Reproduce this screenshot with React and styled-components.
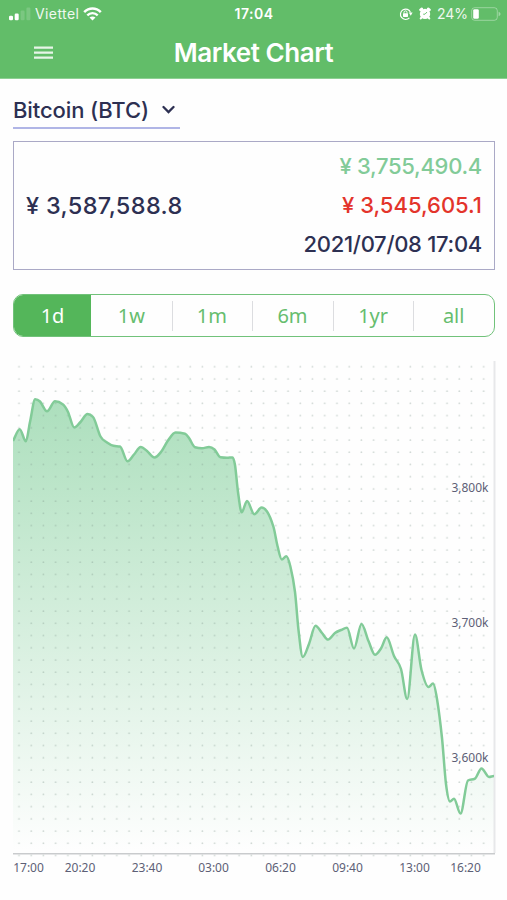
import React, { useState } from "react";
import styled, { createGlobalStyle } from "styled-components";

const RANGES = ["1d", "1w", "1m", "6m", "1yr", "all"];

const TIMES = [
  { label: "17:00", x: 15.5 },
  { label: "20:20", x: 67 },
  { label: "23:40", x: 134 },
  { label: "03:00", x: 200.5 },
  { label: "06:20", x: 267.5 },
  { label: "09:40", x: 334.5 },
  { label: "13:00", x: 401.5 },
  { label: "16:20", x: 452.5 },
];

const PRICES = [
  { label: "3,800k", y: 132 },
  { label: "3,700k", y: 267 },
  { label: "3,600k", y: 402 },
];

// price line, in chart pixels
const POINTS = [
  [0, 81], [6.7, 69.2], [12.9, 81.3], [17, 62], [22.2, 39.2], [27, 41.5],
  [34, 51.3], [42, 41.3], [50, 44.5], [55, 52], [61.2, 67.5], [67.5, 62],
  [74.5, 54], [80, 57], [87.5, 76.5], [94, 82.5], [100.5, 85.8], [107, 86.5],
  [114.5, 101.3], [121, 94.5], [127.7, 86.9], [134, 91], [141.5, 97.5],
  [148, 92], [155, 80.5], [162.5, 72.5], [172, 73.8], [176, 78], [182, 87.2],
  [189, 88.3], [196, 86.9], [201.5, 89.5], [207.5, 97.3], [214, 97.8],
  [219.5, 97.4], [222, 105], [225, 132], [228.7, 152.3], [234, 141],
  [241.3, 154.2], [248.5, 147.6], [254, 151.5], [260.5, 167], [264.5, 186],
  [268.8, 199.4], [273.3, 196.3], [277.5, 207], [282, 232], [285.5, 270],
  [289.8, 297], [296, 284], [302.5, 265.8], [309, 273], [315, 279.6],
  [322, 273], [328, 270], [334, 267.8], [341, 288.5], [348.5, 264],
  [355.5, 281], [362, 294.8], [368, 288.5], [373.7, 277.3], [381, 296],
  [388, 309], [394.2, 339], [402, 274.5], [408.5, 310], [415.5, 327],
  [420, 323.6], [424, 339], [429, 378], [433, 424], [437, 441.5],
  [441, 438.7], [447.5, 453.6], [455, 420.5], [462, 418.6], [468.5, 408.4],
  [476, 417], [481, 416],
];

const smoothPath = (pts) => {
  const slope = (a, b) => (b[1] - a[1]) / (b[0] - a[0]);
  const tangents = pts.map((p, i) => {
    if (i === 0) return slope(p, pts[1]);
    if (i === pts.length - 1) return 0;
    const before = slope(pts[i - 1], p);
    const after = slope(p, pts[i + 1]);
    if (before * after <= 0) return 0;
    const across = Math.abs(slope(pts[i - 1], pts[i + 1]));
    return (
      Math.sign(before) *
      Math.min(2 * Math.abs(before), 2 * Math.abs(after), across)
    );
  });
  return pts.slice(1).reduce((d, p, i) => {
    const prev = pts[i];
    const dx = (p[0] - prev[0]) / 3;
    const c1 = `${prev[0] + dx},${prev[1] + tangents[i] * dx}`;
    const c2 = `${p[0] - dx},${p[1] - tangents[i + 1] * dx}`;
    return `${d} C${c1} ${c2} ${p[0]},${p[1]}`;
  }, `M${pts[0][0]},${pts[0][1]}`);
};

const SignalIcon = () => (
  <svg width="22" height="14" viewBox="0 0 22 14" fill="#fff">
    <rect x="0" y="8.7" width="4" height="4.5" rx="1.2" />
    <rect x="5.7" y="6.5" width="4" height="6.7" rx="1.2" />
    <rect x="11.6" y="3.5" width="4" height="9.7" rx="1.2" opacity="0.16" />
    <rect x="17.4" y="0.5" width="4" height="12.7" rx="1.2" opacity="0.16" />
  </svg>
);

const WifiIcon = () => (
  <svg width="19" height="14" viewBox="0 0 19 14" fill="none" stroke="#fff">
    <path d="M1.2 5.1C6 0.2 13 0.2 17.8 5.1" strokeWidth="2.5" />
    <path d="M4.3 8.4C7.2 5.4 11.8 5.4 14.7 8.4" strokeWidth="2.3" />
    <path d="M9.5 13.5L6.5 10.6C8.2 9 10.8 9 12.5 10.6Z" fill="#fff" stroke="none" />
  </svg>
);

const RotationLockIcon = () => (
  <svg width="14" height="14" viewBox="0 0 14 14" fill="none" stroke="#fff">
    <path d="M10.4 10.9A5.2 5.2 0 1 1 11.5 5.4" strokeWidth="1.2" />
    <path d="M9.8 5.6h3.8l-1.8 3.2z" fill="#fff" stroke="none" />
    <rect x="4" y="6.3" width="5" height="3.6" rx="0.6" fill="#fff" stroke="none" />
    <path d="M5 6.6V5.4a1.5 1.5 0 0 1 3 0v1.2" />
  </svg>
);

const AlarmIcon = () => (
  <svg width="12" height="13" viewBox="0 0 12 13" fill="none" stroke="#fff">
    <circle cx="6" cy="6.9" r="5.2" fill="#fff" stroke="none" />
    <path d="M1.6 2.8L2.8 2M10.4 2.8L9.2 2" strokeWidth="2.8" strokeLinecap="round" />
    <path d="M2.3 10.8L1.8 11.4M9.7 10.8L10.2 11.4" strokeWidth="2.2" strokeLinecap="round" />
    <path d="M8 5L6 7.2H4.2" stroke="#62bd69" strokeWidth="0.9" />
  </svg>
);

const BatteryIcon = () => (
  <svg width="30" height="14" viewBox="0 0 30 14" fill="none">
    <rect x="0.7" y="0.7" width="25.6" height="12.6" rx="3" stroke="#fff" strokeOpacity="0.36" />
    <rect x="2.2" y="2.2" width="5.6" height="9.6" rx="1.4" fill="#fff" />
    <path d="M27.6 4.8v4.4c1.3-.5 1.9-1.3 1.9-2.2s-.6-1.7-1.9-2.2z" fill="#fff" opacity="0.4" />
  </svg>
);

const Chart = () => {
  const line = smoothPath(POINTS);
  return (
    <svg width="494" height="530" viewBox="0 0 494 530">
      <defs>
        <linearGradient id="area" x1="0" y1="39" x2="0" y2="490" gradientUnits="userSpaceOnUse">
          <stop offset="0" stopColor="#82cf9b" stopOpacity="0.66" />
          <stop offset="1" stopColor="#82cf9b" stopOpacity="0" />
        </linearGradient>
        <pattern id="dots" width="12.23" height="12.22" patternUnits="userSpaceOnUse">
          <circle cx="6" cy="6.7" r="0.9" fill="#7b9488" fillOpacity="0.36" />
        </pattern>
      </defs>
      <path d={`${line} V493 H0 Z`} fill="url(#area)" />
      <rect width="477" height="500" fill="url(#dots)" />
      <path d="M481.5 1V493" stroke="#e7e8ea" strokeWidth="2" />
      <path d="M0 493.8H482" stroke="#c9cbcd" strokeWidth="1.4" />
      <path d={line} fill="none" stroke="#82cb98" strokeWidth="2.5" strokeLinejoin="round" />
      {PRICES.map((p) => (
        <AxisLabel key={p.label} x="475.5" y={p.y} textAnchor="end">
          {p.label}
        </AxisLabel>
      ))}
      {TIMES.map((t) => (
        <AxisLabel key={t.label} x={t.x} y="512.4" textAnchor="middle">
          {t.label}
        </AxisLabel>
      ))}
    </svg>
  );
};

const App = () => {
  const [range, setRange] = useState("1d");
  return (
    <Screen>
      <GlobalStyle />
      <Header>
        <StatusBar>
          <StatusSide>
            <SignalIcon />
            <Carrier>Viettel</Carrier>
            <WifiIcon />
          </StatusSide>
          <Clock>17:04</Clock>
          <StatusSide $right>
            <RotationLockIcon />
            <AlarmIcon />
            <Percent>24%</Percent>
            <BatteryIcon />
          </StatusSide>
        </StatusBar>
        <NavBar>
          <MenuButton aria-label="Menu">
            <svg width="19" height="14" viewBox="0 0 19 14" stroke="#fff" strokeWidth="2.2">
              <path d="M0 1.7H19M0 6.7H19M0 11.7H19" />
            </svg>
          </MenuButton>
          <Title>Market Chart</Title>
        </NavBar>
      </Header>
      <Content>
        <CoinSelect>
          <span>Bitcoin (BTC)</span>
          <svg width="13" height="9" viewBox="0 0 13 9" fill="none" stroke="#2d3052" strokeWidth="2.3">
            <path d="M1.5 2L6.5 7L11.5 2" strokeLinecap="round" />
          </svg>
        </CoinSelect>
        <PriceBox>
          <CurrentPrice>¥ 3,587,588.8</CurrentPrice>
          <Quotes>
            <Quote $color="#82cb98" $spacing="-0.3px">¥ 3,755,490.4</Quote>
            <Quote $color="#e3342b">¥ 3,545,605.1</Quote>
            <Quote $color="#2d3052" $spacing="-0.3px">2021/07/08 17:04</Quote>
          </Quotes>
        </PriceBox>
        <Tabs>
          {RANGES.map((r) => (
            <Tab key={r} $active={r === range} onClick={() => setRange(r)}>
              {r}
            </Tab>
          ))}
        </Tabs>
        <Chart />
      </Content>
    </Screen>
  );
};

const GlobalStyle = createGlobalStyle`
  * {
    box-sizing: border-box;
  }
  body {
    margin: 0;
    background: #fefefe;
    font-family: Inter, "Liberation Sans", sans-serif;
  }
  svg {
    display: block;
    flex-shrink: 0;
  }
`;

const Screen = styled.div`
  width: 507px;
  height: 900px;
  overflow: hidden;
  background: #fefefe;
`;

const Header = styled.header`
  height: 79px;
  background: #62bd69;
  border-bottom: 1px solid #8dd093;
  color: #fff;
`;

const StatusBar = styled.div`
  display: grid;
  grid-template-columns: 1fr auto 1fr;
  align-items: center;
  height: 27px;
  padding: 0 8px 0 9px;
`;

const StatusSide = styled.div`
  display: flex;
  align-items: center;
  gap: ${(props) => (props.$right ? "6px" : "4px")};
  justify-content: ${(props) => (props.$right ? "flex-end" : "flex-start")};
  margin-right: ${(props) => (props.$right ? "-2px" : "0")};
`;

const Carrier = styled.span`
  font-size: 14px;
  letter-spacing: 0.4px;
  opacity: 0.9;
`;

const Percent = styled.span`
  font-size: 14px;
  margin-right: -3px;
  opacity: 0.9;
`;

const Clock = styled.span`
  font-size: 14px;
  font-weight: 600;
  letter-spacing: 0.5px;
`;

const NavBar = styled.div`
  display: grid;
  grid-template-columns: 1fr auto 1fr;
  align-items: center;
  height: 51px;
`;

const MenuButton = styled.button`
  justify-self: start;
  margin-left: 34px;
  padding: 0;
  border: none;
  background: none;
  opacity: 0.85;
  cursor: pointer;
`;

const Title = styled.h1`
  margin: 0;
  font-size: 26px;
  font-weight: 600;
  letter-spacing: -0.45px;
`;

const Content = styled.main`
  padding: 16px 0 0 13px;
`;

const CoinSelect = styled.div`
  display: flex;
  align-items: center;
  justify-content: space-between;
  width: 167px;
  height: 34px;
  padding: 0 5px 3px 0;
  border-bottom: 2px solid #b0b5e6;
  color: #2d3052;
  font-size: 22px;
  font-weight: 550;
  letter-spacing: -0.1px;
`;

const PriceBox = styled.section`
  display: flex;
  align-items: center;
  justify-content: space-between;
  width: 482px;
  height: 129px;
  margin-top: 12px;
  padding: 0 12px;
  border: 1px solid #aaa9c6;
`;

const CurrentPrice = styled.div`
  color: #2d3052;
  font-size: 23.5px;
  font-weight: 550;
  letter-spacing: 0.35px;
`;

const Quotes = styled.div`
  display: flex;
  flex-direction: column;
  align-items: flex-end;
`;

const Quote = styled.div`
  color: ${(props) => props.$color};
  font-size: 22px;
  font-weight: 550;
  line-height: 38.7px;
  letter-spacing: ${(props) => props.$spacing || "0"};
`;

const Tabs = styled.div`
  display: flex;
  width: 482px;
  height: 43px;
  margin: 24px 0 23px;
  border: 1.5px solid #71c27a;
  border-radius: 10px;
  overflow: hidden;
`;

const Tab = styled.button`
  display: flex;
  flex: 1;
  align-items: center;
  justify-content: center;
  padding: 0;
  border: none;
  background: ${(props) => (props.$active ? "#54b65a" : "none")};
  color: ${(props) => (props.$active ? "#fff" : "#66bd6e")};
  font-family: "Noto Sans", sans-serif;
  font-size: 20px;
  cursor: pointer;

  &:first-child {
    flex: 0 0 77px;
  }
  & + &::before {
    content: "";
    width: 1px;
    height: 30px;
    margin-right: auto;
    background: #dcdde0;
  }
  & + &::after {
    content: "";
    width: 1px;
    margin-left: auto;
  }
  &:nth-child(2)::before {
    background: none;
  }
`;

const AxisLabel = styled.text`
  fill: #5d5f76;
  font-family: "Noto Sans", sans-serif;
  font-size: 12px;
`;

export default App;
